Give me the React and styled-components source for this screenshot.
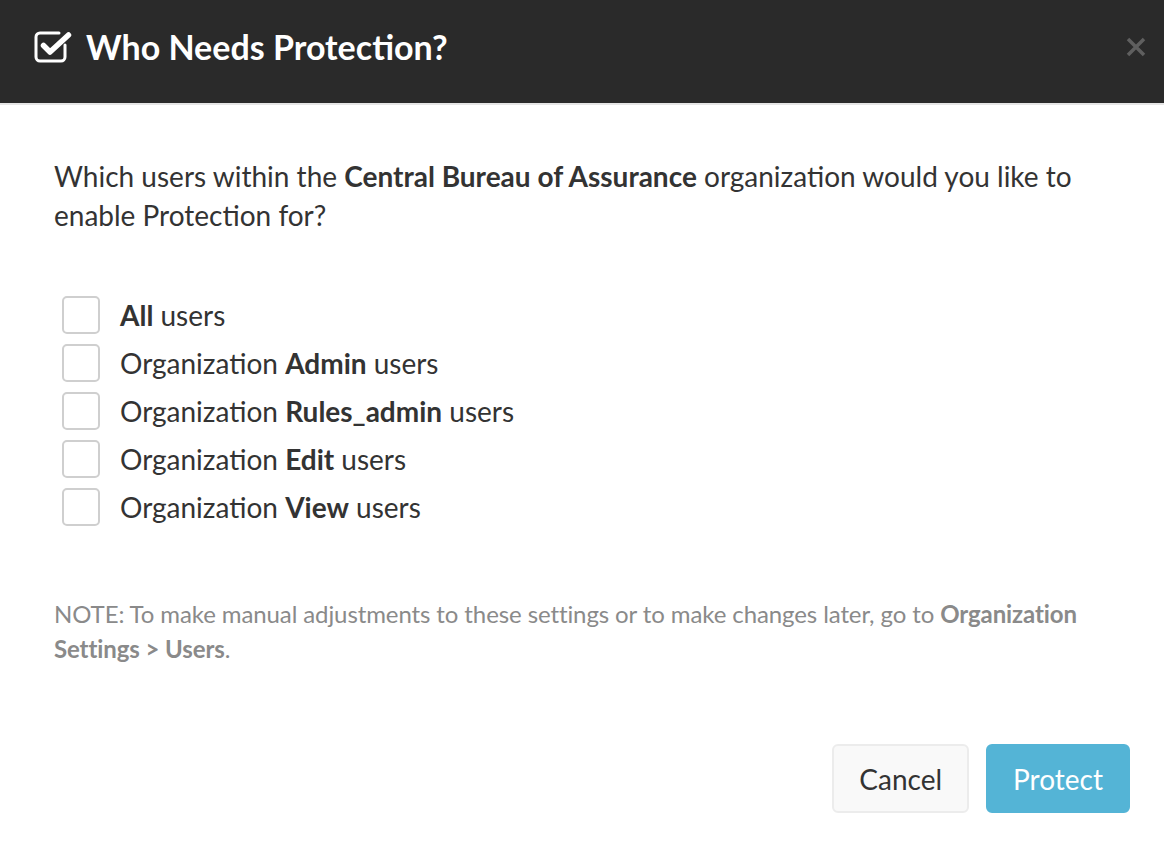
import React from "react";
import styled, { createGlobalStyle } from "styled-components";

const Global = createGlobalStyle`
  html, body { margin: 0; padding: 0; background: #fff; }
  body { font-family: Lato, "Noto Sans", sans-serif; color: #333; }
  * { box-sizing: border-box; }
`;

const Modal = styled.div`
  width: 1164px;
  height: 848px;
  display: flex;
  flex-direction: column;
  background: #fff;
`;

const Header = styled.div`
  height: 105px;
  background: #2a2a2a;
  border-bottom: 2px solid #e5e5e5;
  display: flex;
  align-items: center;
  padding: 0 18px 10px 34px;
`;

const Title = styled.h1`
  flex: 1;
  margin: 0;
  display: flex;
  align-items: center;
  gap: 14px;
  color: #fff;
  font-size: 34px;
  font-weight: 700;
`;

const Close = styled.button`
  border: none;
  background: none;
  padding: 0;
  width: 20px;
  height: 20px;
  display: flex;
  align-items: center;
  justify-content: center;
  cursor: pointer;
`;

const Body = styled.div`
  padding: 52px 54px 0 54px;
  flex: 1;
  display: flex;
  flex-direction: column;
`;

const Question = styled.p`
  margin: 0;
  font-size: 28px;
  line-height: 39px;
  color: #333;
`;

const Options = styled.div`
  margin-top: 61px;
  display: flex;
  flex-direction: column;
  gap: 10px;
  padding-left: 8px;
`;

const Option = styled.label`
  display: flex;
  align-items: center;
  gap: 20px;
  font-size: 28px;
  height: 38px;
  color: #333;
  cursor: pointer;
`;

const Box = styled.span`
  width: 38px;
  height: 38px;
  border: 2px solid #cfcfcf;
  border-radius: 5px;
  background: #fff;
  flex-shrink: 0;
`;

const Note = styled.p`
  margin: 70px 0 0 0;
  font-size: 24px;
  letter-spacing: -0.1px;
  line-height: 35px;
  color: #8a8a8a;
  max-width: 1060px;
`;

const Footer = styled.div`
  display: flex;
  justify-content: flex-end;
  gap: 17px;
  padding: 0 34px 35px 0;
  margin-top: auto;
`;

const Button = styled.button`
  height: 69px;
  padding: 0 25px;
  font-family: Lato, "Noto Sans", sans-serif;
  font-size: 28px;
  border-radius: 6px;
  border: 2px solid ${(p) => (p.$primary ? "#54b4d6" : "#ececec")};
  background: ${(p) => (p.$primary ? "#54b4d6" : "#f9f9f9")};
  color: ${(p) => (p.$primary ? "#fff" : "#333")};
  cursor: pointer;
`;

const CheckIcon = () => (
  <svg width="38" height="32" viewBox="0 0 38 32" fill="none">
    <path
      d="M31 14 V26 a4 4 0 0 1 -4 4 H6 a4 4 0 0 1 -4 -4 V6 a4 4 0 0 1 4 -4 H25"
      stroke="#fff"
      strokeWidth="3"
      strokeLinecap="round"
    />
    <path
      d="M9.5 14.5 L16 21 L34.5 4"
      stroke="#fff"
      strokeWidth="5.5"
      strokeLinecap="round"
      strokeLinejoin="round"
    />
  </svg>
);

const XIcon = () => (
  <svg width="20" height="20" viewBox="0 0 20 20">
    <path d="M2 2 L18 18 M18 2 L2 18" stroke="#5f5f5f" strokeWidth="3.5" />
  </svg>
);

const options = [
  ["", "All", " users"],
  ["Organization ", "Admin", " users"],
  ["Organization ", "Rules_admin", " users"],
  ["Organization ", "Edit", " users"],
  ["Organization ", "View", " users"],
];

export default function App() {
  return (
    <>
      <Global />
      <Modal>
        <Header>
          <Title>
            <CheckIcon />
            Who Needs Protection?
          </Title>
          <Close aria-label="Close">
            <XIcon />
          </Close>
        </Header>
        <Body>
          <Question>
            Which users within the <b>Central Bureau of Assurance</b> organization would you like to
            enable Protection for?
          </Question>
          <Options>
            {options.map(([pre, bold, post]) => (
              <Option key={bold}>
                <Box />
                <span>
                  {pre}
                  <b>{bold}</b>
                  {post}
                </span>
              </Option>
            ))}
          </Options>
          <Note>
            NOTE: To make manual adjustments to these settings or to make changes later, go to{" "}
            <b>Organization Settings &gt; Users</b>.
          </Note>
        </Body>
        <Footer>
          <Button>Cancel</Button>
          <Button $primary>Protect</Button>
        </Footer>
      </Modal>
    </>
  );
}
